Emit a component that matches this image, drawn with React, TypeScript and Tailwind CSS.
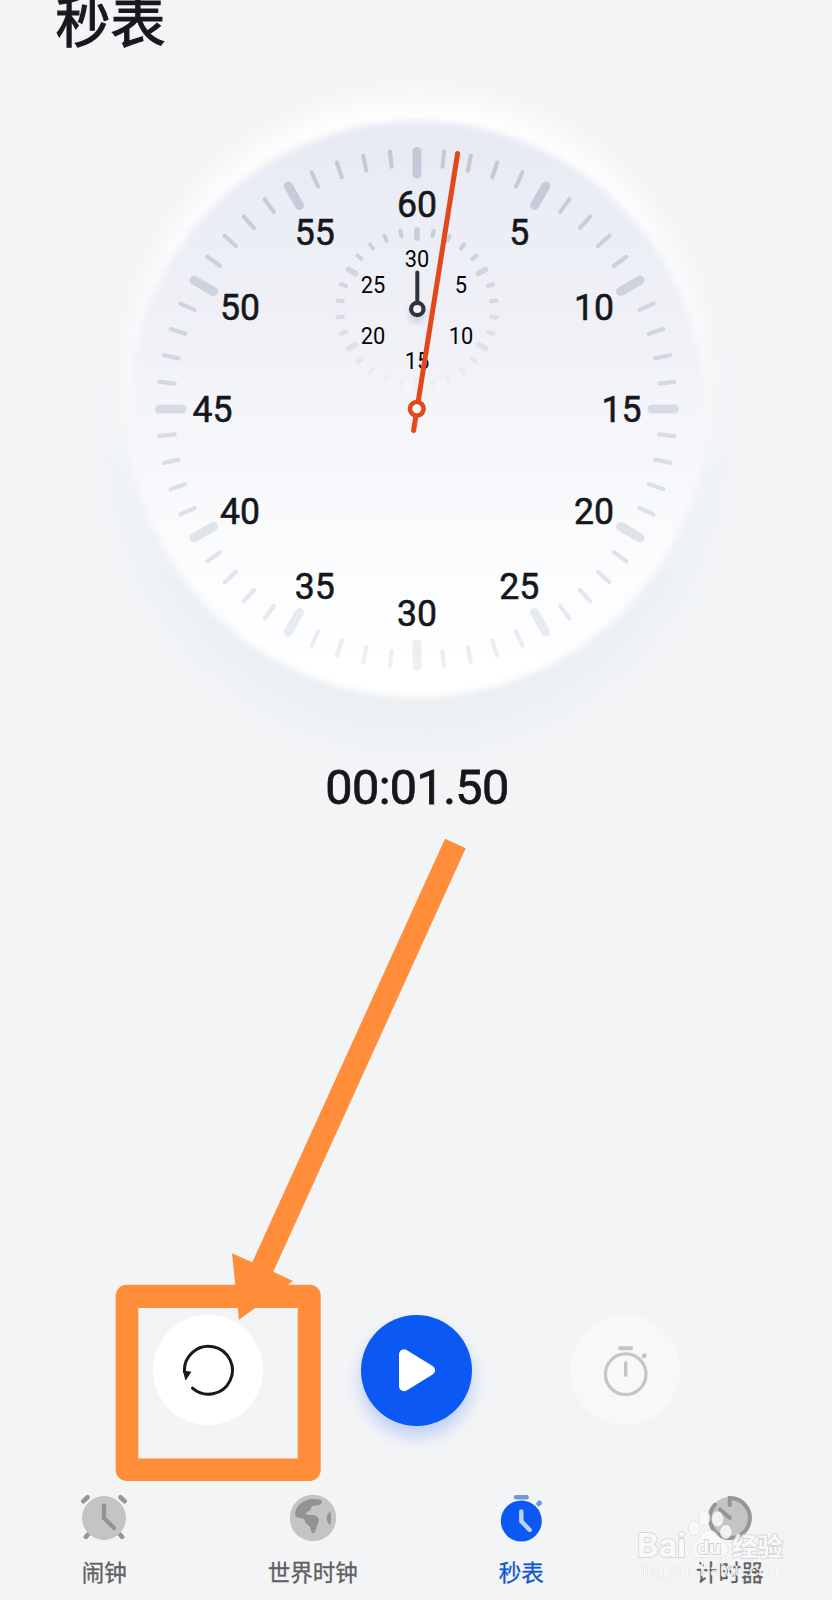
import type { ReactNode } from "react";

const CX = 417;
const CY = 409;

const outerLabels = ["60", "5", "10", "15", "20", "25", "30", "35", "40", "45", "50", "55"];
const innerLabels = ["30", "5", "10", "15", "20", "25"];

interface TicksProps {
  cx: number;
  cy: number;
  count: number;
  major: [number, number, number];
  minor: [number, number, number];
  stroke: string;
}

// major and minor are [inner radius, outer radius, stroke width]
function Ticks({ cx, cy, count, major, minor, stroke }: TicksProps) {
  return (
    <g stroke={stroke} strokeLinecap="round">
      {Array.from({ length: count }, (_, i) => {
        const a = (i / count) * Math.PI * 2;
        const [r1, r2, w] = i % 5 === 0 ? major : minor;
        const sin = Math.sin(a);
        const cos = Math.cos(a);
        return (
          <line
            key={i}
            x1={cx + (r1 + w / 2) * sin}
            y1={cy - (r1 + w / 2) * cos}
            x2={cx + (r2 - w / 2) * sin}
            y2={cy - (r2 - w / 2) * cos}
            strokeWidth={w}
          />
        );
      })}
    </g>
  );
}

interface LabelsProps {
  cx: number;
  cy: number;
  r: number;
  labels: string[];
  size: number;
  fill: string;
  outline?: number;
}

function Labels({ cx, cy, r, labels, size, fill, outline = 0 }: LabelsProps) {
  return (
    <g fontSize={size} fill={fill} stroke={fill} strokeWidth={outline} textAnchor="middle">
      {labels.map((label, i) => {
        const a = (i / labels.length) * Math.PI * 2;
        const x = cx + r * Math.sin(a);
        const y = cy - r * Math.cos(a) + size * 0.354;
        // digits are slightly condensed
        return (
          <text key={label} transform={`translate(${x} ${y}) scale(0.95 1)`}>
            {label}
          </text>
        );
      })}
    </g>
  );
}

function Dial() {
  return (
    <svg width="834" height="760" viewBox="0 0 834 760" className="block">
      <defs>
        <linearGradient id="face" x1="0" y1="0" x2="0" y2="1">
          <stop offset="0" stopColor="#e7e9f3" />
          <stop offset="0.18" stopColor="#ebeef6" />
          <stop offset="0.35" stopColor="#f0f1f7" />
          <stop offset="0.5" stopColor="#f4f5f9" />
          <stop offset="0.65" stopColor="#f8f9fc" />
          <stop offset="0.8" stopColor="#fcfdfe" />
          <stop offset="1" stopColor="#ffffff" />
        </linearGradient>
        <linearGradient id="tick" gradientUnits="userSpaceOnUse" x1="0" y1="147" x2="0" y2="671">
          <stop offset="0" stopColor="#c3c8d9" />
          <stop offset="0.5" stopColor="#d6dbe4" />
          <stop offset="0.8" stopColor="#e0e4ea" />
          <stop offset="1" stopColor="#eef0f4" />
        </linearGradient>
        <linearGradient id="smallTick" gradientUnits="userSpaceOnUse" x1="0" y1="227" x2="0" y2="391">
          <stop offset="0" stopColor="#c9ccda" />
          <stop offset="0.5" stopColor="#d9dbe3" />
          <stop offset="0.8" stopColor="#e3e5ea" />
          <stop offset="1" stopColor="#f0f2f5" />
        </linearGradient>
        <filter id="soft" x="-10%" y="-10%" width="120%" height="120%">
          <feGaussianBlur stdDeviation="3" />
        </filter>
        <filter id="glow" x="-30%" y="-30%" width="160%" height="160%">
          <feGaussianBlur stdDeviation="15" />
        </filter>
        <filter id="shade" x="-30%" y="-30%" width="160%" height="160%">
          <feGaussianBlur stdDeviation="24" />
        </filter>
      </defs>

      <circle cx={CX} cy={CY + 36} r="284" fill="#eaeef2" filter="url(#shade)" />
      <circle cx={CX} cy={CY - 24} r="287" fill="#ffffff" filter="url(#glow)" />
      <circle cx={CX} cy={CY} r="288" fill="url(#face)" filter="url(#soft)" />

      <Ticks cx={CX} cy={CY} count={60} major={[230.5, 262, 9]} minor={[241.5, 261, 4.2]} stroke="url(#tick)" />
      <Ticks cx={CX} cy={309} count={30} major={[68, 82, 5.8]} minor={[72.5, 82, 4.2]} stroke="url(#smallTick)" />
      <Labels cx={CX} cy={CY - 0.5} r={204.5} labels={outerLabels} size={37.5} fill="#15171a" outline={0.6} />
      <Labels cx={CX} cy={310} r={50.8} labels={innerLabels} size={23} fill="#050608" />

      <circle cx={CX + 0.3} cy="315" r="9" fill="#b9bcd6" opacity="0.5" filter="url(#soft)" />
      <g stroke="#31323f" fill="none" strokeLinecap="round">
        <line x1="417.3" y1="272.5" x2="417.3" y2="302" strokeWidth="4" />
        <circle cx="417.3" cy="309" r="6.2" strokeWidth="4.2" fill="#f1f2f8" />
      </g>
      <g stroke="#e2481a" strokeLinecap="round">
        <line x1="457.6" y1="153.5" x2="413.6" y2="430.5" strokeWidth="5" />
        <circle cx="416.8" cy="408.8" r="6.8" strokeWidth="4.6" fill="#ffffff" />
      </g>
    </svg>
  );
}

function ResetIcon() {
  return (
    <svg width="56" height="56" viewBox="-0.5 -1 56 56" fill="none">
      <path d="M12 45.2A24 24 0 1 0 4 29" stroke="#17191c" strokeWidth="3" strokeLinecap="round" />
      <path d="M3.2 28.4L10.2 29L5.2 36.8Z" fill="#17191c" stroke="#17191c" strokeLinejoin="round" />
    </svg>
  );
}

function PlayIcon() {
  return (
    <svg width="38" height="44" viewBox="0 0.7 38 44">
      <path d="M6 6V38L32 22Z" fill="#fff" stroke="#fff" strokeWidth="10" strokeLinejoin="round" />
    </svg>
  );
}

function LapIcon() {
  return (
    <svg width="50" height="54" viewBox="-0.7 -0.5 50 54" fill="none" stroke="#c4c5c7" strokeLinecap="round">
      <circle cx="25" cy="30.7" r="20.3" strokeWidth="3.2" />
      <path d="M19.5 4.7H30.5" strokeWidth="4" />
      <path d="M25 19.5V31.7" strokeWidth="3.4" />
      <path d="M43.3 12.6L43.8 12.1" strokeWidth="4.6" />
    </svg>
  );
}

function AlarmIcon() {
  return (
    <svg width="50" height="50" viewBox="0 0 50 50" fill="none" strokeLinecap="round">
      <g stroke="#959697" strokeWidth="4.6">
        <path d="M4.3 8.2L8.6 4.3M45.7 8.2L41.4 4.3" />
        <path d="M6.8 43.8L10 40.5M43.2 43.8L40 40.5" />
      </g>
      <circle cx="25" cy="25" r="22" fill="#c3c4c5" />
      <path d="M25 12.5V25L35 35" stroke="#929394" strokeWidth="4.2" strokeLinejoin="round" />
    </svg>
  );
}

function GlobeIcon() {
  return (
    <svg width="50" height="50" viewBox="0 0 50 50">
      <circle cx="25" cy="25" r="23.2" fill="#c3c4c5" />
      <path
        d="M32 6.6C25 5 16 6.6 11.5 11.6C7.6 16 6 20.5 7.9 23.2C9.8 25.8 14.2 24.4 16.2 26.4C17.6 27.8 16.8 30 18.6 31.2C20.8 32.2 22 32.8 22.6 35.4C23.2 38.2 23.8 40.2 25.2 40.2C26.8 40 27.8 36.4 28.8 33.8C29.8 31.4 31 29.6 30.8 27C30.5 23 26.8 22 23.2 22C20.4 22 18.4 22.4 18 20.4C17.8 18.4 22.6 18.8 22.8 16C22.8 13.4 25 12.4 28 12.4C30.6 12.4 33.6 11.4 33.8 9.2C33.9 7.8 33.2 6.9 32 6.6Z"
        fill="#929394"
      />
      <path d="M42.2 18C39.6 20.8 38.6 23.4 38.7 25.4C38.8 28 40.2 30.6 42.2 32.2C43.4 27.8 43.5 22.6 42.2 18Z" fill="#929394" />
    </svg>
  );
}

function StopwatchIcon() {
  return (
    <svg width="50" height="50" viewBox="-0.3 0 50 50" fill="none" strokeLinecap="round">
      <circle cx="25" cy="28" r="20.5" fill="#0b58f4" />
      <path d="M19.7 4.2H30.3" stroke="#6d97df" strokeWidth="4.4" />
      <path d="M42.4 10.7L43.2 9.9" stroke="#6d97df" strokeWidth="5" />
      <path d="M25 18.4V28.2L33.4 37" stroke="#bcd2fa" strokeWidth="4.4" strokeLinejoin="round" />
    </svg>
  );
}

function TimerIcon() {
  return (
    <svg width="50" height="50" viewBox="0 0 50 50" fill="none" strokeLinecap="round">
      <circle cx="25" cy="25" r="21" fill="#c3c4c5" />
      <path d="M24.8 12V5A20 20 0 1 1 10 11.6" stroke="#959697" strokeWidth="4" />
      <path d="M15 16.5L25 25" stroke="#929394" strokeWidth="3.8" />
    </svg>
  );
}

interface NavItemProps {
  label: string;
  active?: boolean;
  children: ReactNode;
}

function NavItem({ label, active = false, children }: NavItemProps) {
  return (
    <button className="flex flex-col items-center">
      {children}
      <span
        className={`mt-[14px] text-[22.5px] leading-[32px] [-webkit-text-stroke:0.3px] ${
          active ? "text-[#1556cb]" : "text-[#5f6062]"
        }`}
      >
        {label}
      </span>
    </button>
  );
}

function Highlight() {
  return (
    <svg width="832" height="1600" viewBox="0 0 832 1600" className="pointer-events-none absolute left-0 top-0" fill="#ff8d3a">
      <path d="M445 838.7L465.7 848.3L273.3 1271.7L293 1281L239 1319.7L232 1253.3L252.3 1262.3Z" />
      <path
        fillRule="evenodd"
        d="M127 1284.7H309.5A11 11 0 0 1 320.7 1296V1470A11 11 0 0 1 309.5 1481H127A11 11 0 0 1 115.7 1470V1296A11 11 0 0 1 127 1284.7ZM138.3 1308V1458.5H297.7V1308Z"
      />
    </svg>
  );
}

function Watermark() {
  return (
    <svg
      width="170"
      height="100"
      viewBox="630 1490 170 100"
      className="pointer-events-none absolute left-[630px] top-[1490px]"
      fill="#fbfbfc"
      stroke="#d0d1d3"
      strokeWidth="1"
      fontWeight="700"
      paintOrder="stroke"
    >
      <g opacity="0.85">
        <ellipse cx="694" cy="1528.5" rx="5.6" ry="7.2" />
        <ellipse cx="704.3" cy="1518" rx="5.6" ry="7.4" />
        <ellipse cx="717.6" cy="1519" rx="5.6" ry="7.4" />
        <ellipse cx="725.8" cy="1531.8" rx="5.6" ry="6.8" />
        <path d="M709 1530.5C702 1530.5 700 1539 695.5 1542.5C689 1547.5 691 1557.5 699 1557.5C704 1557.5 711 1556 716 1557C726 1559 730 1551 727 1545.5C724 1541 719.5 1538.5 716.5 1534C714.5 1531 712 1530.5 709 1530.5Z" />
        <g strokeWidth="1.8">
          <text x="637" y="1556.5" fontSize="34" textLength="49" lengthAdjust="spacingAndGlyphs">
            Bai
          </text>
          <text x="697" y="1553.5" fontSize="19" textLength="24" lengthAdjust="spacingAndGlyphs">
            du
          </text>
          <text x="732" y="1555.5" fontSize="25.5">
            经验
          </text>
        </g>
        <text x="638" y="1576" fontSize="19" fontWeight="400" strokeWidth="0.6" textLength="147" lengthAdjust="spacingAndGlyphs">
          jingyan.baidu.com
        </text>
      </g>
    </svg>
  );
}

export default function App() {
  return (
    <div className="relative h-[1600px] w-[832px] overflow-hidden bg-[#f2f4f6] font-['Roboto','Noto_Sans_CJK_SC',sans-serif]">
      <div className="flex h-full w-[834px] flex-col">
        <header className="-mb-[63px] -mt-[17px] h-[80px] pl-[55.5px]">
          <h1 className="text-[55px] leading-[80px] text-[#17191c] [-webkit-text-stroke:1.2px]">秒表</h1>
        </header>

        <Dial />

        <div className="-mt-[7px] text-center text-[48.5px] leading-[70px] tracking-[-0.6px] text-[#15171a] [-webkit-text-stroke:0.8px]">
          00:01.50
        </div>

        <div className="mt-auto grid grid-cols-[repeat(3,208.5px)] justify-center pr-px">
          <div className="flex justify-center">
            <button className="flex size-[110px] items-center justify-center rounded-full bg-white">
              <ResetIcon />
            </button>
          </div>
          <div className="flex justify-center">
            <button className="flex size-[111px] items-center justify-center rounded-full bg-[#0b58f4] shadow-[0_10px_16px_rgba(11,88,244,0.24)]">
              <PlayIcon />
            </button>
          </div>
          <div className="flex justify-center">
            <button className="flex size-[110px] items-center justify-center rounded-full bg-[#f7f8fa]">
              <LapIcon />
            </button>
          </div>
        </div>

        <nav className="mt-[67px] grid h-[107px] shrink-0 grid-cols-4">
          <NavItem label="闹钟">
            <AlarmIcon />
          </NavItem>
          <NavItem label="世界时钟">
            <GlobeIcon />
          </NavItem>
          <NavItem label="秒表" active>
            <StopwatchIcon />
          </NavItem>
          <NavItem label="计时器">
            <TimerIcon />
          </NavItem>
        </nav>
      </div>

      <Highlight />
      <Watermark />
    </div>
  );
}
